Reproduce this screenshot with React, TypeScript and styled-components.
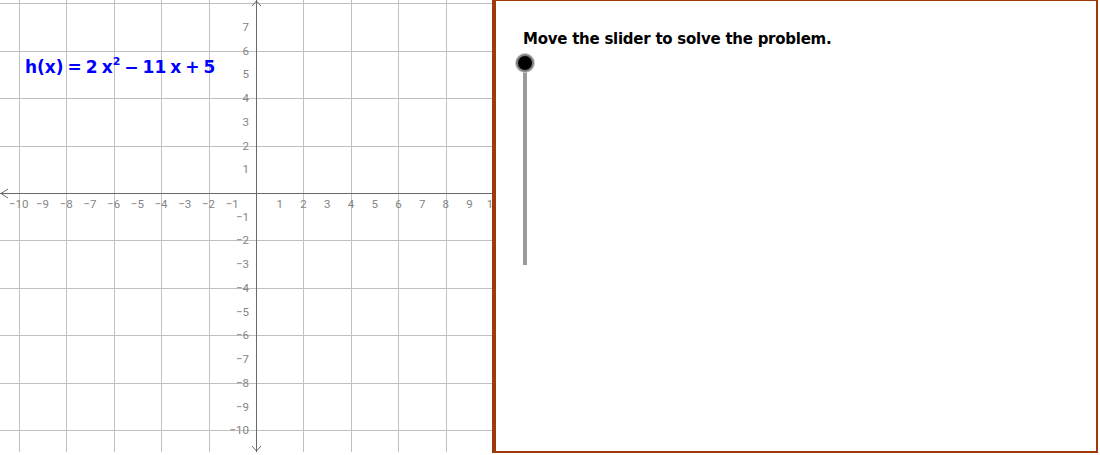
import { FC } from "react";
import styled, { createGlobalStyle } from "styled-components";

const GlobalStyle = createGlobalStyle`
  html, body {
    margin: 0;
    padding: 0;
    background: #ffffff;
  }
`;

const Applet = styled.div`
  display: flex;
  width: 1098px;
  height: 453px;
  font-family: "Liberation Sans", Arial, sans-serif;
`;

const GraphView = styled.div`
  position: relative;
  width: 492px;
  height: 453px;
  flex: none;
  overflow: hidden;
`;

const Formula = styled.div`
  position: absolute;
  left: 25px;
  top: 57px;
  color: #0000ff;
  font-family: "DejaVu Sans", "Liberation Sans", sans-serif;
  font-weight: bold;
  font-size: 17px;
  white-space: nowrap;
  display: flex;
  align-items: baseline;
`;

const Sym = styled.span<{ $pad?: number; $lead?: number }>`
  padding: 0 ${(p) => p.$pad ?? 0}px;
  margin-left: ${(p) => p.$lead ?? 0}px;
`;

const Sup = styled.sup`
  font-size: 11px;
  position: relative;
  top: -1px;
  vertical-align: super;
  line-height: 0;
`;

const SidePanel = styled.div`
  flex: 1;
  box-sizing: border-box;
  border-left: 4px solid #a0380a;
  border-top: 1px solid #a0380a;
  border-right: 2px solid #a0380a;
  border-bottom: 2px solid #a0380a;
  padding: 29px 0 0 27px;
  display: flex;
  flex-direction: column;
  gap: 6px;
`;

const Prompt = styled.div`
  font-family: "DejaVu Sans", "Liberation Sans", sans-serif;
  font-weight: bold;
  font-size: 15px;
  color: #000;
  letter-spacing: -0.25px;
`;

const Slider = styled.div`
  position: relative;
  width: 20px;
  height: 216px;
  margin-left: -7px;
`;

const Track = styled.div`
  position: absolute;
  left: 7px;
  top: 10px;
  width: 4px;
  height: 201px;
  background: #9a9a9a;
`;

const Knob = styled.div`
  position: absolute;
  left: 0;
  top: 0;
  width: 14px;
  height: 14px;
  border-radius: 50%;
  background: #000;
  border: 2px solid #7d7d7d;
  box-shadow: 0 0 0 1px #c8c8c8;
`;

const ORIGIN_X = 256;
const ORIGIN_Y = 193;
const UNIT = 23.73;
const W = 492;
const H = 453;

const minus = (n: number) => (n < 0 ? "\u2212" + Math.abs(n) : String(n));

const Grid: FC = () => {
  const xs: number[] = [];
  for (let i = -10; i <= 10; i += 2) xs.push(i);
  const ys: number[] = [];
  for (let i = -10; i <= 8; i += 2) ys.push(i);
  const xLabels: number[] = [];
  for (let i = -10; i <= 10; i++) if (i !== 0) xLabels.push(i);
  const yLabels: number[] = [];
  for (let i = -10; i <= 7; i++) if (i !== 0) yLabels.push(i);

  return (
    <svg width={W} height={H} style={{ display: "block" }}>
      {xs.map((i) =>
        i === 0 ? null : (
          <line
            key={"gx" + i}
            x1={ORIGIN_X + i * UNIT + 0.5}
            x2={ORIGIN_X + i * UNIT + 0.5}
            y1={0}
            y2={H - 1}
            stroke="#c0c0c0"
            strokeWidth={1}
            shapeRendering="crispEdges"
          />
        )
      )}
      {ys.map((i) =>
        i === 0 ? null : (
          <line
            key={"gy" + i}
            x1={0}
            x2={W}
            y1={Math.round(ORIGIN_Y - i * UNIT) + 0.5}
            y2={Math.round(ORIGIN_Y - i * UNIT) + 0.5}
            stroke="#c0c0c0"
            strokeWidth={1}
            shapeRendering="crispEdges"
          />
        )
      )}
      <line x1={0} x2={W} y1={ORIGIN_Y + 0.5} y2={ORIGIN_Y + 0.5} stroke="#686868" shapeRendering="crispEdges" />
      <line x1={ORIGIN_X + 0.5} x2={ORIGIN_X + 0.5} y1={0} y2={H - 1} stroke="#686868" shapeRendering="crispEdges" />
      <polyline points={`8,${ORIGIN_Y - 4} 1,${ORIGIN_Y + 0.5} 8,${ORIGIN_Y + 5}`} fill="none" stroke="#686868" />
      <polyline points={`${ORIGIN_X - 4},6 ${ORIGIN_X + 0.5},1 ${ORIGIN_X + 5},6`} fill="none" stroke="#686868" />
      <polyline points={`${ORIGIN_X - 4},${H - 7} ${ORIGIN_X + 0.5},${H - 2} ${ORIGIN_X + 5},${H - 7}`} fill="none" stroke="#686868" />
      <g fontFamily="Roboto, 'Liberation Sans', sans-serif" fontSize={11.5} fill="#858585">
        {xLabels.map((i) => (
          <text key={"lx" + i} x={ORIGIN_X + i * UNIT} y={ORIGIN_Y + 15} textAnchor="middle">
            {minus(i)}
          </text>
        ))}
        {yLabels.map((i) => (
          <text key={"ly" + i} x={ORIGIN_X - 7} y={ORIGIN_Y - i * UNIT + 4} textAnchor="end">
            {minus(i)}
          </text>
        ))}
      </g>
    </svg>
  );
};

const App: FC = () => {
  return (
    <>
      <GlobalStyle />
      <Applet>
        <GraphView>
          <Grid />
          <Formula>
            <Sym>h(x)</Sym>
            <Sym $pad={4}>=</Sym>
            <Sym>2</Sym>
            <Sym $lead={4}>
              x<Sup>2</Sup>
            </Sym>
            <Sym $pad={4}>−</Sym>
            <Sym>11</Sym>
            <Sym $lead={4}>x</Sym>
            <Sym $pad={4}>+</Sym>
            <Sym>5</Sym>
          </Formula>
        </GraphView>
        <SidePanel>
          <Prompt>Move the slider to solve the problem.</Prompt>
          <Slider>
            <Track />
            <Knob />
          </Slider>
        </SidePanel>
      </Applet>
    </>
  );
};

export default App;
